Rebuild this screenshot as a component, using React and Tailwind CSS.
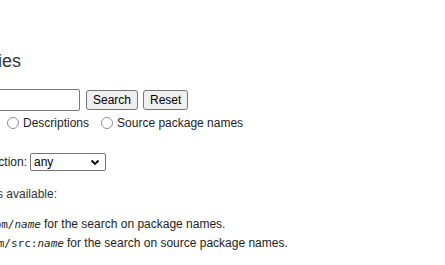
import React from 'react';

function Cut({ w, children, className = '' }) {
    // right-aligned box: whatever does not fit spills off the left edge
    return (
        <div className={`flex justify-end shrink-0 whitespace-nowrap ${className}`} style={{ width: w }}>
            <span className="shrink-0">{children}</span>
        </div>
    );
}

function Radio({ label }) {
    return (
        <label className="flex items-center">
            <span className="w-[12px] h-[12px] rounded-full border border-[#8f8f8f] bg-white mr-[4px]"></span>
            <span>{label}</span>
        </label>
    );
}

export default function App() {
    return (
        <div className="w-[445px] h-[265px] overflow-hidden bg-white text-[12px] text-[#222] font-['Liberation_Sans',Arial,sans-serif]">
            {/* heading */}
            <div className="pt-[50px] h-[72px]">
                <Cut w={21} className="text-[18px] leading-[22px] text-[#333]">Search package directories</Cut>
            </div>

            {/* keyword row */}
            <div className="flex items-center mt-[17px] h-[22px]">
                <Cut w={80}>
                    <span className="inline-flex items-center">
                        Keyword:
                        <input type="text" className="ml-1 w-[150px] h-[22px] border border-[#767676] rounded-[2px] bg-white" readOnly />
                    </span>
                </Cut>
                <button className="ml-[6px] h-[20px] px-[6px] bg-[#efefef] border border-[#767676] rounded-[3px] text-[12px] text-black leading-none">Search</button>
                <button className="ml-[5px] h-[20px] px-[6px] bg-[#efefef] border border-[#767676] rounded-[3px] text-[12px] text-black leading-none">Reset</button>
            </div>

            {/* search on */}
            <div className="flex items-center mt-[5px] h-[14px]">
                <div className="w-[7px] overflow-hidden shrink-0"></div>
                <Radio label="Descriptions" />
                <span className="w-[12px]"></span>
                <Radio label="Source package names" />
            </div>

            {/* section */}
            <div className="flex items-center mt-[23px] h-[18px]">
                <Cut w={27}>Section:</Cut>
                <div className="ml-[3px] w-[76px] h-[18px] border border-[#767676] rounded-[2px] flex items-center justify-between px-[3px] text-black">
                    <span>any</span>
                    <svg width="10" height="10" viewBox="0 0 10 10" className="mr-[2px]">
                        <path d="M1.5 3.5 L5 7 L8.5 3.5" stroke="#000" strokeWidth="1.8" fill="none" />
                    </svg>
                </div>
            </div>

            {/* shortcuts */}
            <div className="mt-[14px] h-[14px] flex text-[#333]">
                <Cut w={57}>There are shortcuts for some searches available:</Cut>
            </div>
            <div className="mt-[16px] flex items-baseline h-[18px]">
                <Cut w={41}>
                    <code className="font-['DejaVu_Sans_Mono',monospace] text-[11px]">http://packages.ubuntu.com/<i>name</i></code>
                </Cut>
                <span className="ml-[3px]">for the search on package names.</span>
            </div>
            <div className="mt-[1px] flex items-baseline h-[18px]">
                <Cut w={64}>
                    <code className="font-['DejaVu_Sans_Mono',monospace] text-[11px]">http://packages.ubuntu.com/src:<i>name</i></code>
                </Cut>
                <span className="ml-[3px]">for the search on source package names.</span>
            </div>
        </div>
    );
}
